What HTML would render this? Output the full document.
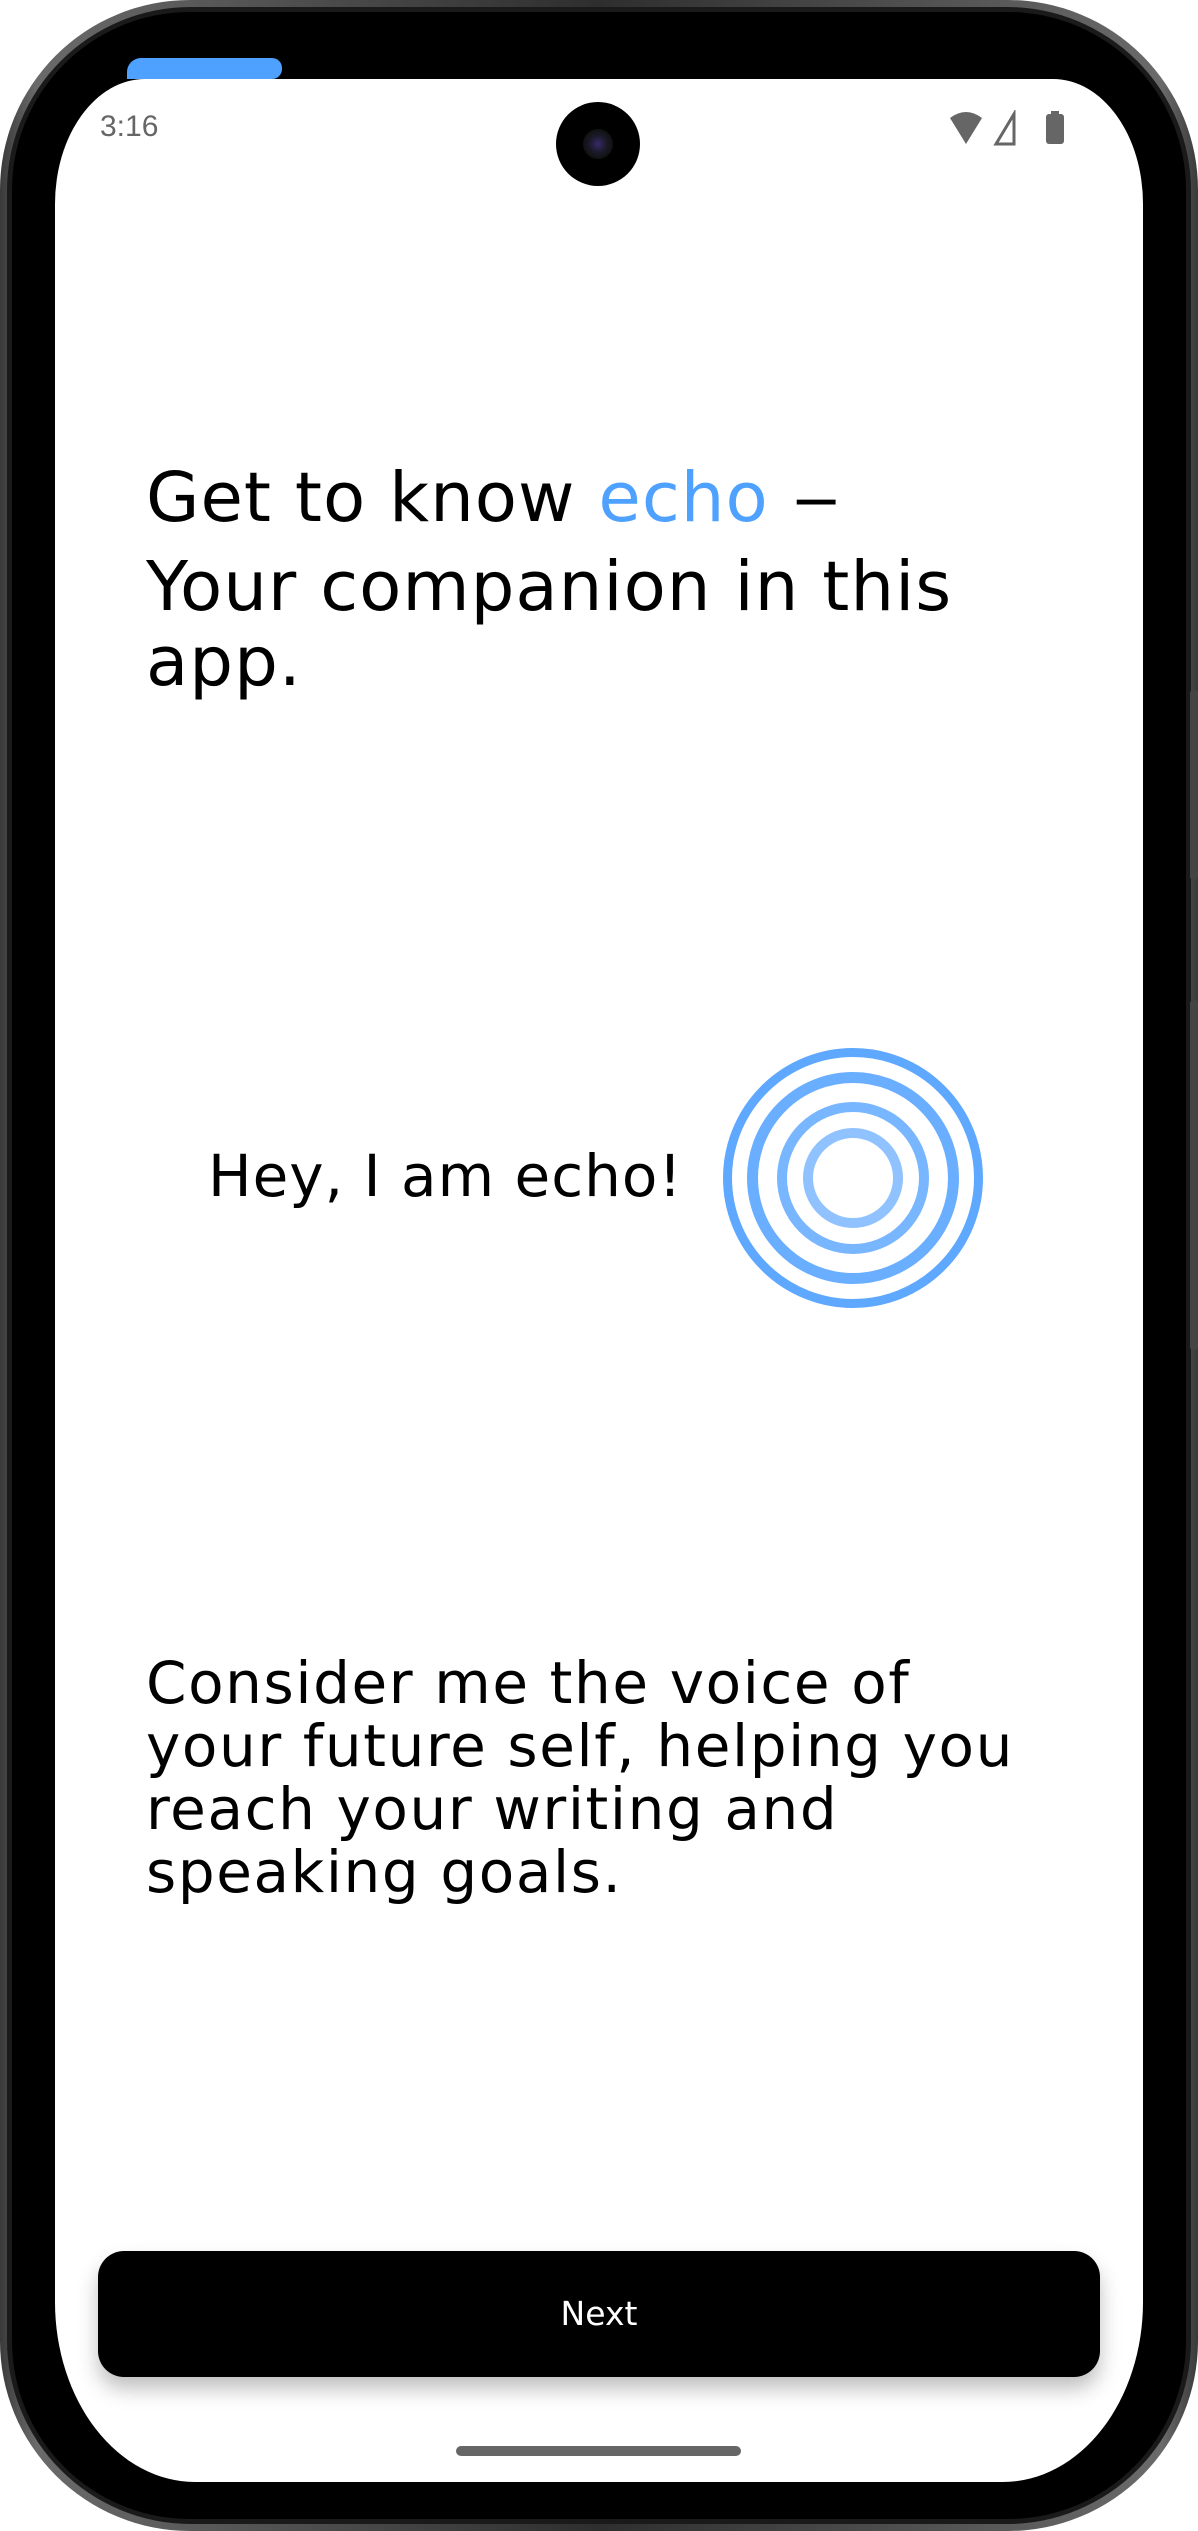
<!DOCTYPE html>
<html><head><meta charset="utf-8"><style>
html,body{margin:0;padding:0;background:#fff;}
body{width:1198px;height:2531px;position:relative;overflow:hidden;font-family:"Liberation Sans",sans-serif;}
.frame{position:absolute;left:0;top:0;width:1198px;height:2531px;border-radius:190px;background:linear-gradient(90deg,#3a3a3a,#6a6a6a 3%,#2e2e2e 50%,#6a6a6a 97%,#3a3a3a);}
.frame2{position:absolute;left:7px;top:7px;right:7px;bottom:7px;border-radius:184px;background:#1a1a1a;}
.bezel{position:absolute;left:12px;top:12px;right:12px;bottom:12px;border-radius:178px;background:#000;}
.screen{position:absolute;left:55px;top:79px;width:1088px;height:2403px;background:#fff;border-radius:90px 90px 140px 140px / 125px 125px 180px 180px;}
.t{position:absolute;white-space:nowrap;color:#000;}
.d{font-family:"DejaVu Sans",sans-serif;}
</style></head><body>
<div class="frame"></div><div class="frame2"></div><div class="bezel"></div>
<div style="position:absolute;left:1190px;top:690px;width:8px;height:190px;background:#444;border-radius:3px"></div>
<div style="position:absolute;left:1190px;top:1000px;width:8px;height:350px;background:#444;border-radius:3px"></div>
<div class="screen"></div>
<div style="position:absolute;left:127px;top:58px;width:155px;height:21px;background:#4ea1ff;border-radius:14px 10px 10px 0"></div>
<div style="position:absolute;left:292px;top:58px;width:780px;height:21px;background:#000;border-radius:10px 0 0 10px"></div>
<div class="t" style="left:100px;top:110px;font-size:30px;color:#666">3:16</div>
<div style="position:absolute;left:556px;top:102px;width:84px;height:84px;border-radius:50%;background:#000"></div>
<div style="position:absolute;left:583px;top:129px;width:30px;height:30px;border-radius:50%;background:radial-gradient(circle,#3a2a6a 0,#1a1a2a 40%,#111 70%,#222 100%)"></div>
<svg style="position:absolute;left:948px;top:110px" width="122" height="38" viewBox="0 0 122 38">
<path d="M2 8 Q18 -4 34 8 L18 34 Z" fill="#666"/>
<path d="M66 4 L66 34 L48 34 Z" fill="none" stroke="#666" stroke-width="3"/>
<rect x="98" y="4" width="18" height="30" rx="3" fill="#666"/><rect x="103" y="1" width="8" height="4" fill="#666"/>
</svg>
<div class="t d" style="left:146px;top:458px;font-size:69px;line-height:80px;letter-spacing:1px">Get to know <span style="color:#4ea1ff">echo</span> <span style="display:inline-block;transform:scaleX(1.4);transform-origin:left">–</span></div>
<div class="t d" style="left:146px;top:547px;font-size:69px;line-height:80px;letter-spacing:1px">Your companion in this</div>
<div class="t d" style="left:146px;top:622px;font-size:69px;line-height:80px;letter-spacing:1px">app.</div>
<div class="t d" style="left:208px;top:1141px;font-size:58px;line-height:70px;letter-spacing:1px">Hey, I am echo!</div>
<svg style="position:absolute;left:713px;top:1038px" width="280" height="280" viewBox="0 0 280 280">
<circle cx="140" cy="140" r="125.5" fill="none" stroke="#5fa8ff" stroke-width="9"/>
<circle cx="140" cy="140" r="100.5" fill="none" stroke="#6aaeff" stroke-width="11"/>
<circle cx="140" cy="140" r="71" fill="none" stroke="#78b6ff" stroke-width="10"/>
<circle cx="140" cy="140" r="45" fill="none" stroke="#8fc2ff" stroke-width="10"/>
</svg>
<div class="t d" style="left:146px;top:1652px;font-size:58px;line-height:63px;letter-spacing:1.6px">Consider me the voice of<br>your future self, helping you<br>reach your writing and<br>speaking goals.</div>
<div style="position:absolute;left:98px;top:2251px;width:1002px;height:126px;background:#000;border-radius:26px;box-shadow:0 12px 20px rgba(0,0,0,0.25)"></div>
<div class="t d" style="left:98px;top:2294px;width:1002px;text-align:center;font-size:33px;line-height:40px;color:#fff">Next</div>
<div style="position:absolute;left:456px;top:2446px;width:285px;height:10px;border-radius:5px;background:#666"></div>
</body></html>
